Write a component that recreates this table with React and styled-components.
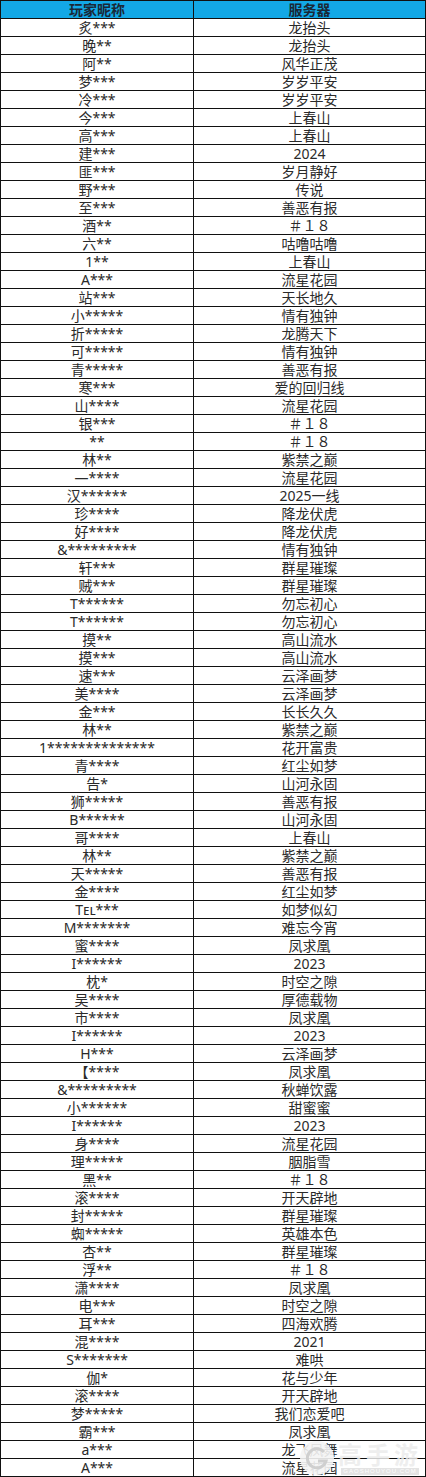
import React from "react";
import styled, { createGlobalStyle } from "styled-components";

const Global = createGlobalStyle`
  html, body { margin: 0; padding: 0; background: #ffffff; }
  body { font-family: "Noto Sans", "Noto Sans CJK SC", sans-serif; }
`;

const rows = [
  ["炙***", "龙抬头"],
  ["晚**", "龙抬头"],
  ["阿**", "风华正茂"],
  ["梦***", "岁岁平安"],
  ["冷***", "岁岁平安"],
  ["今***", "上春山"],
  ["高***", "上春山"],
  ["建***", "2024"],
  ["匪***", "岁月静好"],
  ["野***", "传说"],
  ["至***", "善恶有报"],
  ["酒**", "＃１８"],
  ["六**", "咕噜咕噜"],
  ["1**", "上春山"],
  ["A***", "流星花园"],
  ["站***", "天长地久"],
  ["小*****", "情有独钟"],
  ["折*****", "龙腾天下"],
  ["可*****", "情有独钟"],
  ["青*****", "善恶有报"],
  ["寒***", "爱的回归线"],
  ["山****", "流星花园"],
  ["银***", "＃１８"],
  ["**", "＃１８"],
  ["林**", "紫禁之巅"],
  ["—****", "流星花园"],
  ["汉******", "2025一线"],
  ["珍****", "降龙伏虎"],
  ["好****", "降龙伏虎"],
  ["&*********", "情有独钟"],
  ["轩***", "群星璀璨"],
  ["贼***", "群星璀璨"],
  ["T******", "勿忘初心"],
  ["T******", "勿忘初心"],
  ["摸**", "高山流水"],
  ["摸***", "高山流水"],
  ["速***", "云泽画梦"],
  ["美****", "云泽画梦"],
  ["金***", "长长久久"],
  ["林**", "紫禁之巅"],
  ["1**************", "花开富贵"],
  ["青****", "红尘如梦"],
  ["告*", "山河永固"],
  ["狮*****", "善恶有报"],
  ["B******", "山河永固"],
  ["哥****", "上春山"],
  ["林**", "紫禁之巅"],
  ["天*****", "善恶有报"],
  ["金****", "红尘如梦"],
  ["Tᴇʟ***", "如梦似幻"],
  ["M*******", "难忘今宵"],
  ["蜜****", "凤求凰"],
  ["I******", "2023"],
  ["枕*", "时空之隙"],
  ["吴****", "厚德载物"],
  ["市****", "凤求凰"],
  ["I******", "2023"],
  ["H***", "云泽画梦"],
  ["【****", "凤求凰"],
  ["&*********", "秋蝉饮露"],
  ["小******", "甜蜜蜜"],
  ["I******", "2023"],
  ["身****", "流星花园"],
  ["理*****", "胭脂雪"],
  ["黑**", "＃１８"],
  ["滚****", "开天辟地"],
  ["封*****", "群星璀璨"],
  ["蜘*****", "英雄本色"],
  ["杏**", "群星璀璨"],
  ["浮**", "＃１８"],
  ["潇****", "凤求凰"],
  ["电***", "时空之隙"],
  ["耳***", "四海欢腾"],
  ["混****", "2021"],
  ["S*******", "难哄"],
  ["伽*", "花与少年"],
  ["滚****", "开天辟地"],
  ["梦*****", "我们恋爱吧"],
  ["霸***", "凤求凰"],
  ["a***", "龙飞凤舞"],
  ["A***", "流星花园"],
];

const Page = styled.div`
  position: relative;
  width: 426px;
`;

const Table = styled.table`
  width: 426px;
  border-collapse: collapse;
  table-layout: fixed;
`;

const HeadCell = styled.th`
  height: 17px;
  padding: 0;
  border: 1px solid #111;
  background: #13a8e6;
  color: #1a2836;
  font-family: "Noto Sans CJK SC", sans-serif;
  font-size: 14px;
  font-weight: 700;
  line-height: 17px;
  text-align: center;
  width: ${(p) => (p.$first ? "192px" : "auto")};
`;

const Cell = styled.td`
  height: 17px;
  padding: 0;
  border: 1px solid #111;
  color: #2a2a2a;
  font-family: "Noto Sans", "Noto Sans CJK SC", sans-serif;
  font-size: 14px;
  line-height: 17px;
  text-align: center;
  white-space: nowrap;
  overflow: hidden;
`;

const Watermark = styled.div`
  position: absolute;
  right: 4px;
  bottom: 2px;
  display: flex;
  align-items: center;
  gap: 4px;
  pointer-events: none;
`;

const Badge = styled.div`
  width: 34px;
  height: 34px;
  border-radius: 50%;
  background: rgba(244, 244, 244, 0.9);
  display: flex;
  align-items: center;
  justify-content: center;
`;

const BrandBlock = styled.div`
  display: flex;
  flex-direction: column;
  align-items: center;
  gap: 2px;
`;

const BrandName = styled.div`
  font-family: "Noto Sans CJK SC", sans-serif;
  font-size: 24px;
  font-weight: 700;
  line-height: 24px;
  letter-spacing: 4px;
  color: rgba(236, 236, 236, 0.85);
`;

const BrandUrl = styled.div`
  font-family: "Liberation Sans", sans-serif;
  font-size: 6px;
  line-height: 7px;
  letter-spacing: 1px;
  color: rgba(255, 255, 255, 0.95);
  background: rgba(222, 222, 222, 0.85);
  padding: 0 2px;
`;

export default function App() {
  return (
    <Page>
      <Global />
      <Table>
        <thead>
          <tr>
            <HeadCell $first>玩家昵称</HeadCell>
            <HeadCell>服务器</HeadCell>
          </tr>
        </thead>
        <tbody>
          {rows.map(([name, server], i) => (
            <tr key={i}>
              <Cell>{name}</Cell>
              <Cell>{server}</Cell>
            </tr>
          ))}
        </tbody>
      </Table>
      <Watermark>
        <Badge>
          <svg width="26" height="26" viewBox="0 0 26 26">
            <path d="M20 7 A9.5 9.5 0 1 0 22 16 L14 16" fill="none" stroke="#cfcfcf" strokeWidth="3" />
          </svg>
        </Badge>
        <BrandBlock>
          <BrandName>高手游</BrandName>
          <BrandUrl>GAOSHOUYOU.COM</BrandUrl>
        </BrandBlock>
      </Watermark>
    </Page>
  );
}
